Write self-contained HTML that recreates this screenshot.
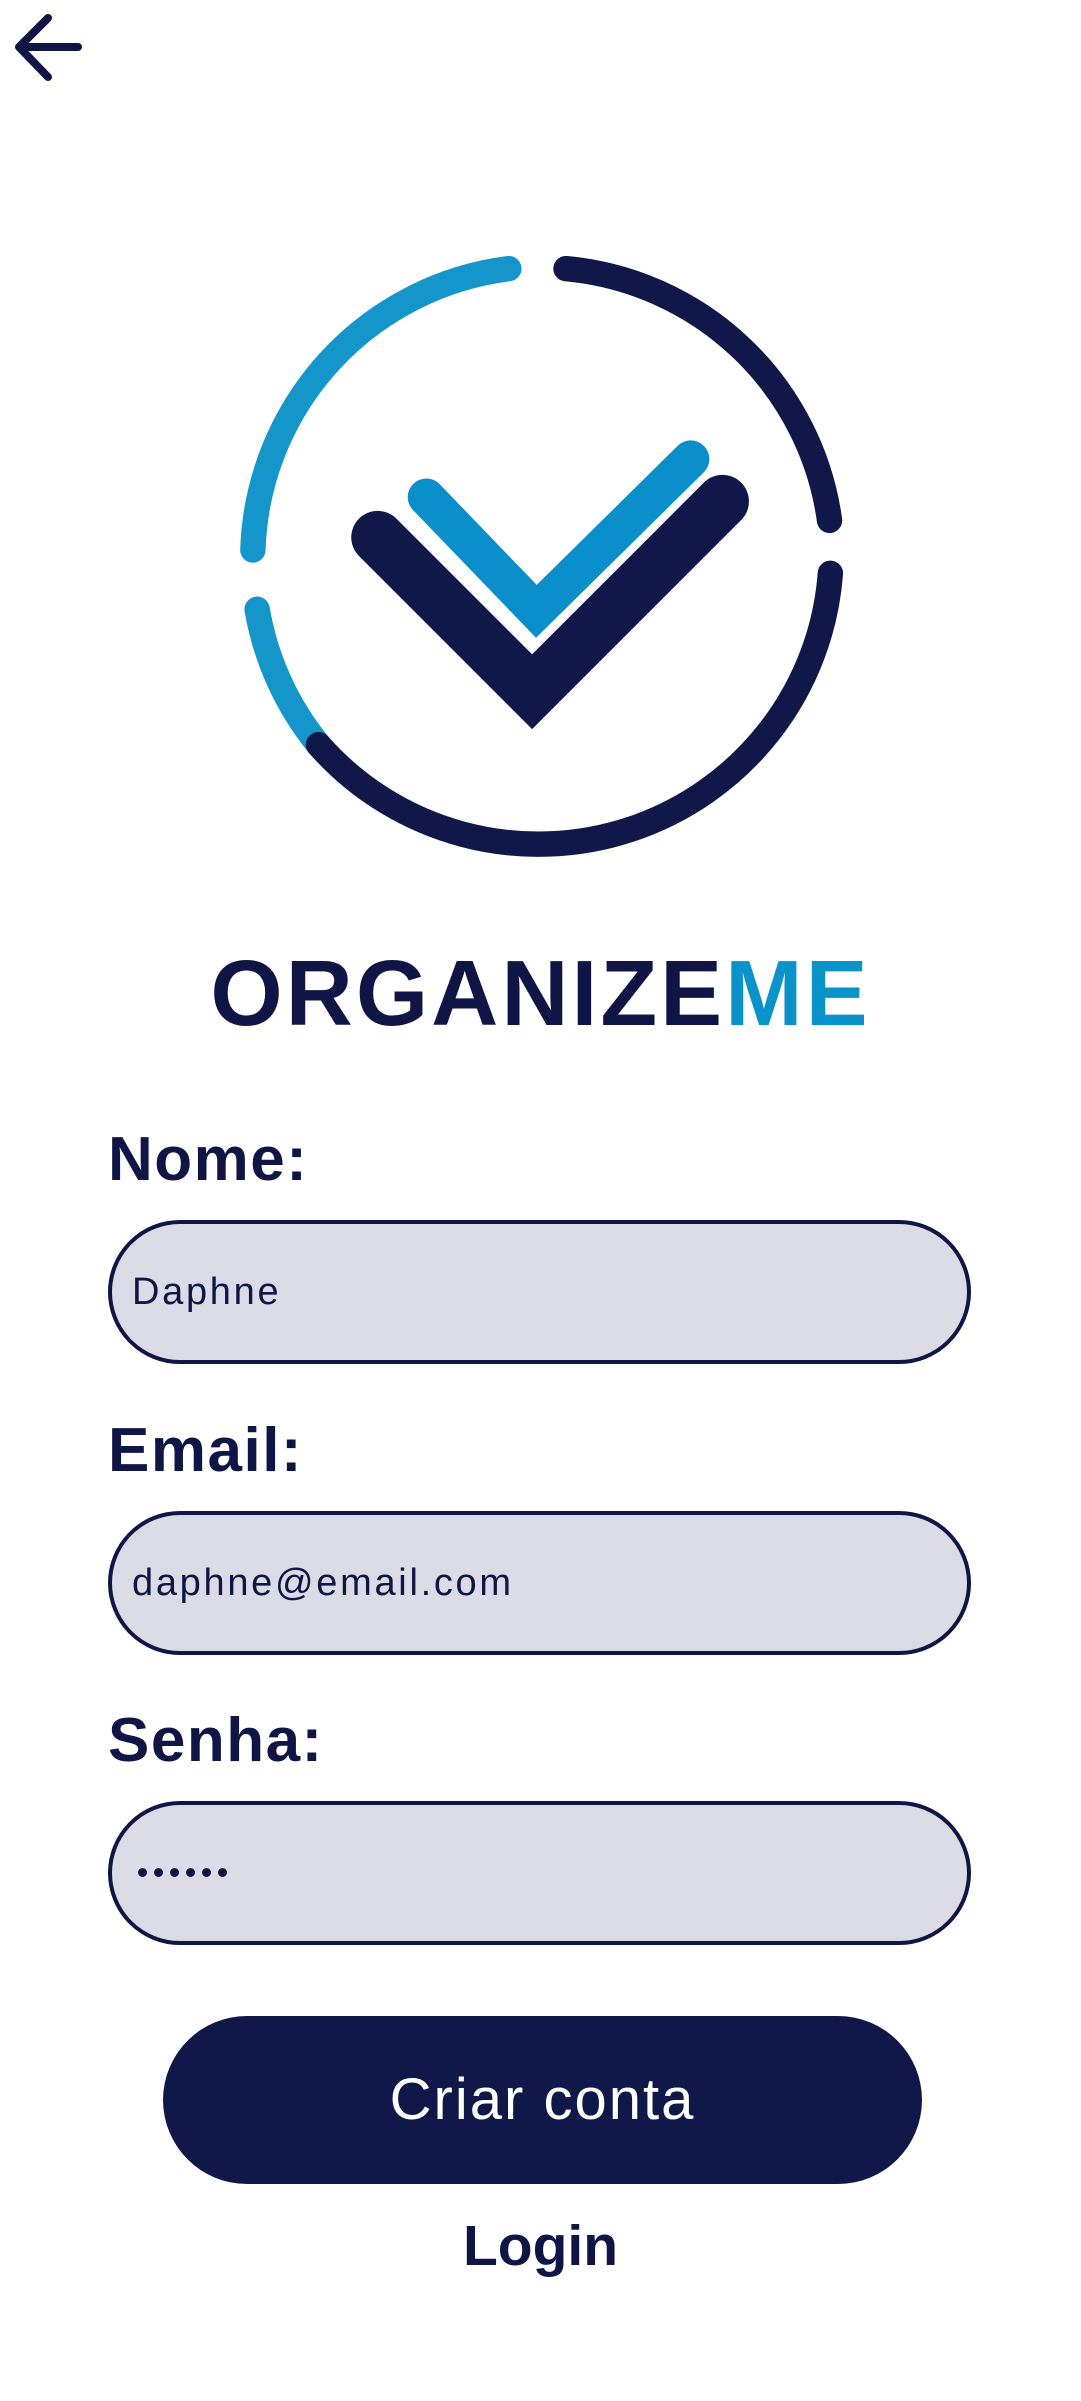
<!DOCTYPE html>
<html><head><meta charset="utf-8"><style>
html,body{margin:0;padding:0;background:#fff;}
body{width:1081px;height:2401px;position:relative;overflow:hidden;font-family:"Liberation Sans",sans-serif;color:#0f1645;}
.abs{position:absolute;}
.title{left:0;width:1081px;top:938px;text-align:center;font-weight:bold;font-size:93px;letter-spacing:3px;line-height:110px;color:#0f1645;padding-left:0px;}
.title span{color:#0993c9;}
.lbl{left:108px;font-weight:bold;font-size:62px;line-height:70px;color:#0f1645;letter-spacing:1.5px;}
.inp{left:108px;width:855px;height:136px;border:4px solid #0f1645;border-radius:72px;background:#dadbe4;box-sizing:content-box;}
.inp .t{position:absolute;left:20px;top:0;line-height:136px;font-size:38px;letter-spacing:2.7px;color:#0f1645;}
.btn{left:163px;top:2016px;width:759px;height:168px;border-radius:84px;background:#10184a;color:#fff;text-align:center;line-height:168px;font-size:58px;letter-spacing:2px;}
.login{left:0;width:1081px;top:2210px;text-align:center;font-weight:bold;font-size:57px;line-height:72px;}
.dot{position:absolute;top:63px;width:9px;height:9px;border-radius:50%;background:#0f1645;}
</style></head><body>
<svg class="abs" style="left:0;top:0" width="100" height="100" viewBox="0 0 100 100">
<path d="M78 47 H19 M48 18 L19 47 L48 77" fill="none" stroke="#0f1645" stroke-width="8" stroke-linecap="round" stroke-linejoin="round"/>
</svg>
<svg class="abs" style="left:200px;top:220px" width="660" height="660" viewBox="0 0 1560 1560">
<g fill="none" stroke-width="60" stroke-linecap="round">
<path d="M125 780 A692 692 0 0 1 730 115" stroke="#1496cb"/>
<path d="M135 920 A692 692 0 0 0 280 1240" stroke="#1496cb"/>
<path d="M865 115 A692 692 0 0 1 1488 710" stroke="#10184a"/>
<path d="M1490 835 A692 692 0 0 1 280 1240" stroke="#10184a"/>
</g>
<path d="M535 655 L795 925 L1160 565" fill="none" stroke="#0b8fcb" stroke-width="88" stroke-linecap="round" stroke-linejoin="miter"/>
<path d="M420 750 L785 1115 L1235 665" fill="none" stroke="#10184a" stroke-width="125" stroke-linecap="round" stroke-linejoin="miter"/>
</svg>
<div class="abs title">ORGANIZE<span>ME</span></div>
<div class="abs lbl" style="top:1125px">Nome:</div>
<div class="abs inp" style="top:1220px"><div class="t">Daphne</div></div>
<div class="abs lbl" style="top:1416px">Email:</div>
<div class="abs inp" style="top:1511px"><div class="t">daphne@email.com</div></div>
<div class="abs lbl" style="top:1706px">Senha:</div>
<div class="abs inp" style="top:1801px">
<div class="dot" style="left:26px"></div><div class="dot" style="left:42px"></div><div class="dot" style="left:58px"></div><div class="dot" style="left:74px"></div><div class="dot" style="left:90px"></div><div class="dot" style="left:106px"></div>
</div>
<div class="abs btn">Criar conta</div>
<div class="abs login">Login</div>
</body></html>
